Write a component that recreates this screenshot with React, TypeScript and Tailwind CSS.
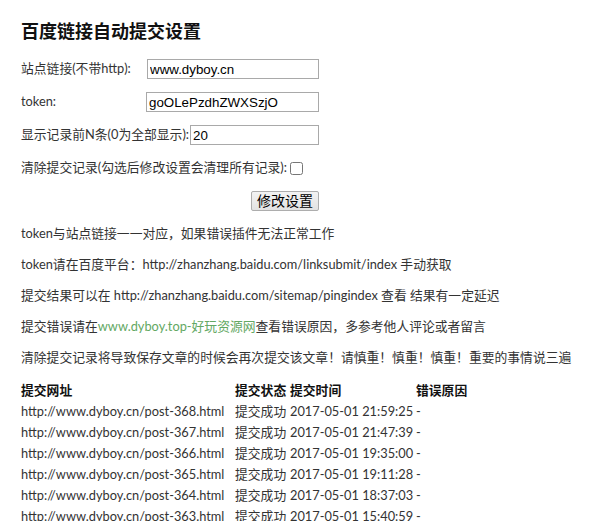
import React from 'react';

const rows = [
  ['http://www.dyboy.cn/post-368.html', '提交成功', '2017-05-01 21:59:25', '-'],
  ['http://www.dyboy.cn/post-367.html', '提交成功', '2017-05-01 21:47:39', '-'],
  ['http://www.dyboy.cn/post-366.html', '提交成功', '2017-05-01 19:35:00', '-'],
  ['http://www.dyboy.cn/post-365.html', '提交成功', '2017-05-01 19:11:28', '-'],
  ['http://www.dyboy.cn/post-364.html', '提交成功', '2017-05-01 18:37:03', '-'],
  ['http://www.dyboy.cn/post-363.html', '提交成功', '2017-05-01 15:40:59', '-'],
];

const inputCls =
  'h-[20px] shrink-0 border border-[#a9a9a9] bg-white px-[2px] text-[13.33px] text-black outline-none font-["Liberation_Sans",sans-serif]';

const App: React.FC = () => {
  return (
    <div className='h-[521px] overflow-hidden bg-white pl-[21px] pt-[19px] text-[12.8px] text-[#333] font-["Lato","Noto_Sans_CJK_SC",sans-serif]'>
      <h2 className="text-[18px] font-bold leading-[24px] text-[#111]">百度链接自动提交设置</h2>

      {/* settings form */}
      <div className="mt-[16px] flex w-[298px] flex-col gap-[13px] whitespace-nowrap">
        <div className="flex h-[20px] items-center">
          <span>站点链接(不带http):</span>
          <input className={`${inputCls} ml-auto w-[172px]`} defaultValue="www.dyboy.cn" />
        </div>
        <div className="flex h-[20px] items-center">
          <span>token:</span>
          <input className={`${inputCls} ml-auto w-[173px]`} defaultValue="goOLePzdhZWXSzjO" />
        </div>
        <div className="flex h-[20px] items-center">
          <span>显示记录前N条(0为全部显示):</span>
          <input className={`${inputCls} ml-auto w-[129px]`} defaultValue="20" />
        </div>
        <div className="flex h-[20px] items-center">
          <span>清除提交记录(勾选后修改设置会清理所有记录):</span>
          <input type="checkbox" className="ml-[3px] h-[13px] w-[13px]" />
        </div>
        <div className="flex h-[20px] justify-end">
          <button className="h-[20px] w-[68px] rounded-[2px] border border-[#adadad] bg-gradient-to-b from-[#f3f3f3] to-[#e2e2e2] text-[14px] leading-[18px] text-black">
            修改设置
          </button>
        </div>
      </div>

      {/* notes */}
      <div className="mt-[13px] whitespace-nowrap leading-[18px]">
        <p className="mb-[13px]">token与站点链接一一对应，如果错误插件无法正常工作</p>
        <p className="mb-[13px]">token请在百度平台：http://zhanzhang.baidu.com/linksubmit/index 手动获取</p>
        <p className="mb-[13px]">提交结果可以在 http://zhanzhang.baidu.com/sitemap/pingindex 查看 结果有一定延迟</p>
        <p className="mb-[13px]">
          提交错误请在<span className="text-[#63a863]">www.dyboy.top-好玩资源网</span>查看错误原因，多参考他人评论或者留言
        </p>
        <p className="mb-[13px]">清除提交记录将导致保存文章的时候会再次提交该文章！请慎重！慎重！慎重！重要的事情说三遍</p>
      </div>

      {/* records */}
      <table className="-ml-[2px] border-separate border-spacing-[2px] leading-[19px]">
        <thead>
          <tr className="text-left font-bold text-[#111]">
            <th className="w-[212px] p-0 font-bold">提交网址</th>
            <th className="w-[53px] p-0 font-bold">提交状态</th>
            <th className="w-[124px] p-0 font-bold">提交时间</th>
            <th className="w-[80px] p-0 font-bold">错误原因</th>
          </tr>
        </thead>
        <tbody>
          {rows.map((r) => (
            <tr key={r[0]}>
              {r.map((c, i) => (
                <td key={i} className="whitespace-nowrap p-0">
                  {c}
                </td>
              ))}
            </tr>
          ))}
        </tbody>
      </table>
    </div>
  );
};

export default App;
